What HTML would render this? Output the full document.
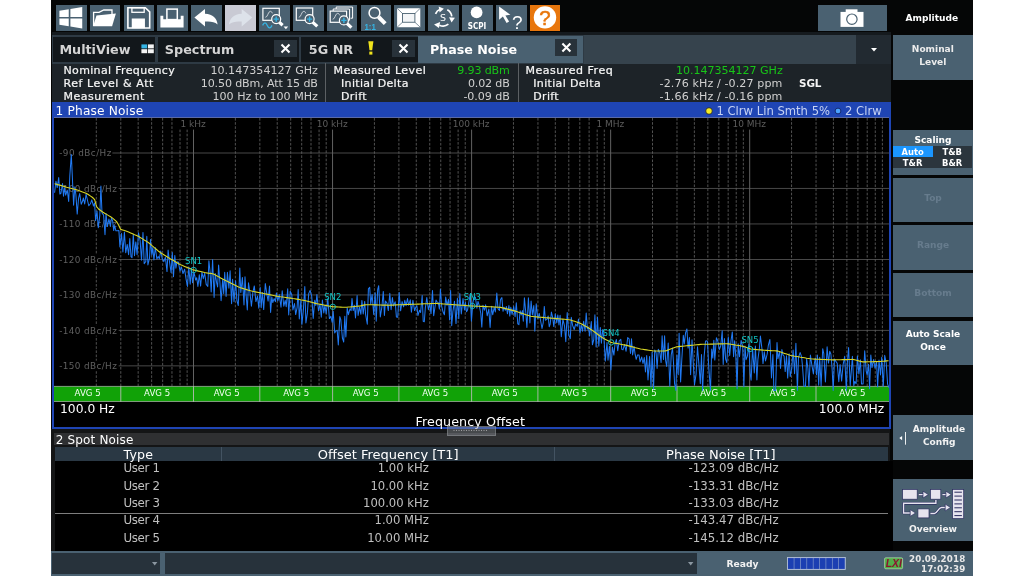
<!DOCTYPE html>
<html lang="en">
<head>
<meta charset="utf-8">
<title>Phase Noise</title>
<style>
html,body{margin:0;padding:0;background:#fff;}
body{width:1024px;height:576px;position:relative;overflow:hidden;font-family:"DejaVu Sans","Liberation Sans",sans-serif;}
#app{position:absolute;left:0;top:0;width:1024px;height:576px;will-change:transform;}
#app div{position:absolute;white-space:nowrap;line-height:1;}
#app svg{position:absolute;overflow:visible;}
.sb{-webkit-text-stroke:0.22px currentColor;}
.tb{border-radius:0;}
</style>
</head>
<body>
<div id="app">

<div style="left:51px;top:0px;width:922px;height:576px;background:#050606;"></div>
<div class="tb" style="left:55.9px;top:5.3px;width:30.7px;height:25.6px;background:#4a6171"><svg width="30.7" height="25.6" viewBox="0 0 30.7 25.6" style="left:0;top:0"><polygon points="3.4,5.75 12.75,4.25 12.75,12 3.4,12" fill="#fff"/><polygon points="14.4,4 26.25,2 26.25,12 14.4,12" fill="#fff"/><polygon points="3.4,13.5 12.75,13.5 12.75,21.25 3.4,19.75" fill="#fff"/><polygon points="14.4,13.5 26.25,13.5 26.25,23.5 14.4,21.6" fill="#fff"/></svg></div>
<div class="tb" style="left:89.75px;top:5.3px;width:30.7px;height:25.6px;background:#4a6171"><svg width="30.7" height="25.6" viewBox="0 0 30.7 25.6" style="left:0;top:0"><path d="M3.6,21 L3.6,7.3 L9,7.3 L13.8,5 L22,5 L22,9" fill="none" stroke="#fff" stroke-width="1.3"/><path d="M6.5,10.4 L25.9,8.6 L22.1,21.2 L3.1,21.2 Z" fill="#fff"/></svg></div>
<div class="tb" style="left:123.6px;top:5.3px;width:30.7px;height:25.6px;background:#4a6171"><svg width="30.7" height="25.6" viewBox="0 0 30.7 25.6" style="left:0;top:0"><path d="M3.9,2.7 L21.3,2.7 L25.7,6.8 L25.7,23 L3.9,23 Z" fill="none" stroke="#fff" stroke-width="1.6"/><rect x="7.9" y="2.7" width="12.3" height="4.6" fill="none" stroke="#fff" stroke-width="1.3"/><rect x="7.75" y="13.5" width="13.2" height="9.7" fill="#fff"/></svg></div>
<div class="tb" style="left:157.45px;top:5.3px;width:30.7px;height:25.6px;background:#4a6171"><svg width="30.7" height="25.6" viewBox="0 0 30.7 25.6" style="left:0;top:0"><path d="M3.4,10.8 L6.3,10.8 L6.3,14.2 L23.7,14.2 L23.7,10.8 L26.6,10.8 L26.6,22.5 L3.4,22.5 Z" fill="#fff"/><rect x="9.9" y="4.1" width="10.4" height="10.5" fill="none" stroke="#fff" stroke-width="1.5"/></svg></div>
<div class="tb" style="left:191.3px;top:5.3px;width:30.7px;height:25.6px;background:#4a6171"><svg width="30.7" height="25.6" viewBox="0 0 30.7 25.6" style="left:0;top:0"><path d="M3.4,12.6 L14,4.1 L14,8.8 C22,9 26,13.5 26.6,19.6 C23.5,16.6 19.5,16.3 14,16.6 L14,21.4 Z" fill="#fff"/></svg></div>
<div class="tb" style="left:225.15px;top:5.3px;width:30.7px;height:25.6px;background:#c9cad4"><svg width="30.7" height="25.6" viewBox="0 0 30.7 25.6" style="left:0;top:0"><path d="M27.3,12.6 L16.7,4.1 L16.7,8.8 C8.7,9 4.7,13.5 4.1,19.6 C7.2,16.6 11.2,16.3 16.7,16.6 L16.7,21.4 Z" fill="#dde2ea"/></svg></div>
<div class="tb" style="left:259.0px;top:5.3px;width:30.7px;height:25.6px;background:#4a6171"><svg width="30.7" height="25.6" viewBox="0 0 30.7 25.6" style="left:0;top:0"><rect x="3.9" y="3.3" width="16.4" height="12" fill="none" stroke="#fff" stroke-width="1.2"/><path d="M6.4,12.3 c2.5,0 2.5,-6 5,-6 c1.2,0 1.5,1 2,2" fill="none" stroke="#d8dde2" stroke-width="0.9"/><line x1="20.2" y1="17.1" x2="23.6" y2="20.2" stroke="#fff" stroke-width="3.2"/><circle cx="17.2" cy="14.1" r="4.5" fill="#4a6171" stroke="#fff" stroke-width="1.2"/><path d="M14.6,14.1 h5.2 M17.2,11.5 v5.2" stroke="#35b4e4" stroke-width="1.4" fill="none"/><path d="M3.6,20.4 c1.6,-3.4 3.2,-3.4 4.7,0 c1.5,3.4 3.1,3.4 4.7,0" fill="none" stroke="#35b4e4" stroke-width="1.3"/><polygon points="24.6,21.4 29.2,21.4 26.9,24.2" fill="#fff"/></svg></div>
<div class="tb" style="left:292.85px;top:5.3px;width:30.7px;height:25.6px;background:#4a6171"><svg width="30.7" height="25.6" viewBox="0 0 30.7 25.6" style="left:0;top:0"><rect x="3.3" y="3.0" width="16.4" height="12.3" fill="none" stroke="#fff" stroke-width="1.2"/><path d="M5.8,12.3 c2.5,0 2.5,-6 5,-6 c1.2,0 1.5,1 2,2" fill="none" stroke="#d8dde2" stroke-width="0.9"/><line x1="19.6" y1="17.1" x2="24.3" y2="21.4" stroke="#fff" stroke-width="3.2"/><circle cx="16.6" cy="14.1" r="4.5" fill="#4a6171" stroke="#fff" stroke-width="1.2"/><path d="M14.000000000000002,14.1 h5.2 M16.6,11.5 v5.2" stroke="#35b4e4" stroke-width="1.4" fill="none"/></svg></div>
<div class="tb" style="left:326.7px;top:5.3px;width:30.7px;height:25.6px;background:#4a6171"><svg width="30.7" height="25.6" viewBox="0 0 30.7 25.6" style="left:0;top:0"><path d="M6.2,6 v-2 h16.4 v11.2 h-2 M9.2,4 v-2 h16.4 v11.2 h-2" fill="none" stroke="#fff" stroke-width="1"/><rect x="3.2" y="6.1" width="16.4" height="11.2" fill="none" stroke="#fff" stroke-width="1.2"/><path d="M5.7,14.299999999999997 c2.5,0 2.5,-6 5,-6 c1.2,0 1.5,1 2,2" fill="none" stroke="#d8dde2" stroke-width="0.9"/><line x1="19.9" y1="18.4" x2="24.4" y2="22.6" stroke="#fff" stroke-width="3.2"/><circle cx="16.9" cy="15.4" r="4.5" fill="#4a6171" stroke="#fff" stroke-width="1.2"/><path d="M14.299999999999999,15.4 h5.2 M16.9,12.8 v5.2" stroke="#35b4e4" stroke-width="1.4" fill="none"/></svg></div>
<div class="tb" style="left:360.55px;top:5.3px;width:30.7px;height:25.6px;background:#4a6171"><svg width="30.7" height="25.6" viewBox="0 0 30.7 25.6" style="left:0;top:0"><line x1="17.6" y1="12" x2="24.2" y2="18.6" stroke="#fff" stroke-width="4"/><circle cx="13.5" cy="7.9" r="5.4" fill="none" stroke="#fff" stroke-width="1.5"/><text x="3.4" y="24.7" font-size="8.8" font-weight="bold" fill="#35b4e4" textLength="11.4" lengthAdjust="spacingAndGlyphs" font-family="Liberation Sans, sans-serif">1:1</text></svg></div>
<div class="tb" style="left:394.4px;top:5.3px;width:30.7px;height:25.6px;background:#4a6171"><svg width="30.7" height="25.6" viewBox="0 0 30.7 25.6" style="left:0;top:0"><rect x="3.1" y="3.25" width="23.2" height="19" fill="#fff"/><path d="M3.1,3.25 L8.5,8.5 M26.3,3.25 L20.9,8.5 M3.1,22.25 L8.5,17.25 M26.3,22.25 L20.9,17.25" stroke="#4a6171" stroke-width="0.7"/><rect x="8.5" y="8.5" width="12.4" height="8.75" fill="#f3f5f7" stroke="#4a6171" stroke-width="0.9"/></svg></div>
<div class="tb" style="left:428.25px;top:5.3px;width:30.7px;height:25.6px;background:#4a6171"><svg width="30.7" height="25.6" viewBox="0 0 30.7 25.6" style="left:0;top:0"><g transform="translate(15.2 12.3) scale(1.13) translate(-15 -12.25)"><g fill="none" stroke="#fff" stroke-width="1.5"><path d="M8.2,9.2 A7.6,7.6 0 0 1 12.3,5.2"/><path d="M18.6,5.6 A7.6,7.6 0 0 1 22.6,11.4"/><path d="M19.6,18.3 A7.6,7.6 0 0 1 11.6,19.2"/></g><polygon points="11,2.6 15.6,4.6 11.8,7.9" fill="#fff"/><polygon points="20.2,12.2 25.4,12.6 22.4,16.9" fill="#fff"/><polygon points="12.3,16.4 11.2,21.8 6.9,18.6" fill="#fff"/></g><text x="15" y="16" font-size="9.5" text-anchor="middle" fill="#fff" font-family="DejaVu Sans, Liberation Sans, sans-serif">S</text></svg></div>
<div class="tb" style="left:462.1px;top:5.3px;width:30.7px;height:25.6px;background:#4a6171"><svg width="30.7" height="25.6" viewBox="0 0 30.7 25.6" style="left:0;top:0"><circle cx="14.6" cy="7.4" r="5.9" fill="#fff"/><text x="15" y="24.1" font-size="8.1" font-weight="bold" text-anchor="middle" fill="#fff" font-family="DejaVu Sans Condensed, DejaVu Sans, Liberation Sans, sans-serif">SCPI</text></svg></div>
<div class="tb" style="left:495.95px;top:5.3px;width:30.7px;height:25.6px;background:#4a6171"><svg width="30.7" height="25.6" viewBox="0 0 30.7 25.6" style="left:0;top:0"><polygon points="3.1,1.6 3.1,14.75 6.9,11.6 10.6,17.9 13.1,16.6 9.4,10.4 14.4,9.75" fill="#fff"/><text x="21.2" y="24" font-size="19" text-anchor="middle" fill="#fff" font-family="Liberation Sans, sans-serif">?</text></svg></div>
<div class="tb" style="left:529.8px;top:5.3px;width:30.7px;height:25.6px;background:#e8760c"><svg width="30.7" height="25.6" viewBox="0 0 30.7 25.6" style="left:0;top:0"><circle cx="15" cy="12.4" r="11.2" fill="#fff"/><text x="15" y="19.6" font-size="20.5" text-anchor="middle" fill="#e8760c" stroke="#e8760c" stroke-width="0.5" font-family="Liberation Sans, sans-serif">?</text></svg></div>
<div class="tb" style="left:818px;top:5.4px;width:69.2px;height:25.6px;background:#4a6171"><svg width="69.6" height="25.6" viewBox="0 0 69.6 25.6" style="left:0;top:0"><rect x="22.5" y="6.9" width="23" height="15" fill="#fff"/><rect x="27.7" y="4.3" width="11.8" height="4" fill="#fff"/><circle cx="33.9" cy="14.2" r="5.2" fill="#fff" stroke="#4a6171" stroke-width="1.2"/></svg></div>
<div style="left:781.8px;width:300px;text-align:center;top:14px;font-size:9.05px;color:#fff;font-weight:bold;">Amplitude</div>
<div style="left:893px;top:35px;width:80px;height:44.6px;background:#4a6171;"></div>
<div style="left:782.8px;width:300px;text-align:center;top:45px;font-size:9.05px;color:#ececec;font-weight:bold;">Nominal</div>
<div style="left:782.8px;width:300px;text-align:center;top:58px;font-size:9.05px;color:#ececec;font-weight:bold;">Level</div>
<div style="left:893px;top:130.4px;width:80px;height:44.2px;background:#4a6171;"></div>
<div style="left:783px;width:300px;text-align:center;top:136px;font-size:9.05px;color:#fff;font-weight:bold;">Scaling</div>
<div style="left:893px;top:146.4px;width:39.6px;height:10.8px;background:#1b96ff;"></div>
<div style="left:932.6px;top:146.4px;width:39.2px;height:10.8px;background:#2b353d;"></div>
<div style="left:893px;top:157.2px;width:78.8px;height:11.2px;background:#2b353d;"></div>
<div style="left:762.6px;width:300px;text-align:center;top:148px;font-size:8.4px;color:#fff;font-weight:bold;">Auto</div>
<div style="left:802.2px;width:300px;text-align:center;top:148px;font-size:8.4px;color:#fff;font-weight:bold;">T&amp;B</div>
<div style="left:762.6px;width:300px;text-align:center;top:159px;font-size:8.4px;color:#fff;font-weight:bold;">T&amp;R</div>
<div style="left:802.2px;width:300px;text-align:center;top:159px;font-size:8.4px;color:#fff;font-weight:bold;">B&amp;R</div>
<div style="left:893px;top:177.8px;width:80px;height:44px;background:#4a6171;"></div>
<div style="left:783px;width:300px;text-align:center;top:194px;font-size:9.05px;color:#677c8d;font-weight:bold;">Top</div>
<div style="left:893px;top:225px;width:80px;height:44.6px;background:#4a6171;"></div>
<div style="left:783px;width:300px;text-align:center;top:241px;font-size:9.05px;color:#677c8d;font-weight:bold;">Range</div>
<div style="left:893px;top:272.8px;width:80px;height:44.6px;background:#4a6171;"></div>
<div style="left:783px;width:300px;text-align:center;top:289px;font-size:9.05px;color:#677c8d;font-weight:bold;">Bottom</div>
<div style="left:893px;top:320.6px;width:80px;height:44.2px;background:#4a6171;"></div>
<div style="left:783px;width:300px;text-align:center;top:330px;font-size:9.05px;color:#fff;font-weight:bold;">Auto Scale</div>
<div style="left:783px;width:300px;text-align:center;top:343px;font-size:9.05px;color:#fff;font-weight:bold;">Once</div>
<div style="left:893px;top:415.4px;width:80px;height:44.6px;background:#4a6171;"></div>
<div style="left:789px;width:300px;text-align:center;top:425px;font-size:9.05px;color:#f2f2f2;font-weight:bold;">Amplitude</div>
<div style="left:789.2px;width:300px;text-align:center;top:438px;font-size:9.05px;color:#f2f2f2;font-weight:bold;">Config</div>
<svg width="10" height="16" viewBox="0 0 10 16" style="left:898px;top:430px"><polygon points="1.3,8.1 4.1,6 4.1,10.2" fill="#fff"/><line x1="7.5" y1="2" x2="7.5" y2="14.7" stroke="#fff" stroke-width="0.9"/></svg>
<div style="left:893px;top:479px;width:80px;height:61.8px;background:#4a6171;"></div>
<div style="left:783px;width:300px;text-align:center;top:525px;font-size:9.15px;color:#f2f2f2;font-weight:bold;">Overview</div>
<svg width="80" height="62" viewBox="893 479 80 62" style="left:893px;top:479px"><g stroke="#2a2c5e" stroke-width="0.7" fill="#e6e4ee"><rect x="902.6" y="489.4" width="14.6" height="9.8"/><rect x="930.4" y="489.4" width="10.4" height="9.8"/><rect x="952.6" y="489.4" width="11.1" height="29.2"/><rect x="917.9" y="508.9" width="11.1" height="9"/></g><g stroke="#2a2c5e" stroke-width="2.7" fill="none" stroke-linejoin="round"><path d="M918.8,494.6 H925"/><path d="M942.4,494.6 H948"/><path d="M935.9,499.9 V503.3 H903.6 V513 H912"/><path d="M930.4,513.5 H934.5 C937.5,513.5 938,507.5 941.5,507.5 H947"/></g><g stroke="#e6e4ee" stroke-width="1.4" fill="none"><path d="M918.8,494.6 H925"/><path d="M942.4,494.6 H948"/><path d="M935.9,499.9 V503.3 H903.6 V513 H912"/><path d="M930.4,513.5 H934.5 C937.5,513.5 938,507.5 941.5,507.5 H947"/></g><polygon points="928.4,494.6 923.0,491.20000000000005 923.0,498.0" fill="#e6e4ee" stroke="#2a2c5e" stroke-width="0.7"/><polygon points="951.3,494.6 945.9,491.20000000000005 945.9,498.0" fill="#e6e4ee" stroke="#2a2c5e" stroke-width="0.7"/><polygon points="915.6,513 910.2,509.6 910.2,516.4" fill="#e6e4ee" stroke="#2a2c5e" stroke-width="0.7"/><polygon points="950.6,507.5 945.2,504.1 945.2,510.9" fill="#e6e4ee" stroke="#2a2c5e" stroke-width="0.7"/><line x1="954.4" y1="492.2" x2="961.9" y2="492.2" stroke="#2a2c5e" stroke-width="1"/><line x1="954.4" y1="496.1" x2="961.9" y2="496.1" stroke="#2a2c5e" stroke-width="1"/><line x1="954.4" y1="500.0" x2="961.9" y2="500.0" stroke="#2a2c5e" stroke-width="1"/><line x1="954.4" y1="503.9" x2="961.9" y2="503.9" stroke="#2a2c5e" stroke-width="1"/><line x1="954.4" y1="507.8" x2="961.9" y2="507.8" stroke="#2a2c5e" stroke-width="1"/><line x1="954.4" y1="511.7" x2="961.9" y2="511.7" stroke="#2a2c5e" stroke-width="1"/><line x1="954.4" y1="515.6" x2="961.9" y2="515.6" stroke="#2a2c5e" stroke-width="1"/></svg>
<div style="left:52px;top:32px;width:839px;height:3px;background:#151a1e;"></div>
<div style="left:52px;top:35px;width:839px;height:29px;background:#2e3a44;"></div>
<div style="left:52.6px;top:37px;width:102.6px;height:25px;background:#12171b;"></div>
<div style="left:59.4px;top:44px;font-size:12.75px;color:#d4d4d4;font-weight:bold;">MultiView</div>
<svg width="14" height="11" viewBox="0 0 14 11" style="left:141px;top:43.6px"><rect x="0.4" y="0.4" width="5.8" height="4" fill="#35b4e4"/><rect x="7" y="0.4" width="5.8" height="4" fill="#f4f4f4"/><rect x="0.4" y="5.2" width="5.8" height="4" fill="#f4f4f4"/><rect x="7" y="5.2" width="5.8" height="4" fill="#f4f4f4"/></svg>
<div style="left:157.8px;top:37px;width:141.4px;height:25px;background:#12171b;"></div>
<div style="left:164.8px;top:44px;font-size:12.79px;color:#d4d4d4;font-weight:bold;">Spectrum</div>
<div style="left:274px;top:39.6px;width:23px;height:17.2px;background:#28323a"><svg width="23" height="17.2" viewBox="0 0 23 17.2" style="left:0;top:0"><path d="M7.5,4.6 L15.5,12.6 M15.5,4.6 L7.5,12.6" stroke="#fff" stroke-width="2.1" fill="none"/></svg></div>
<div style="left:301px;top:37px;width:117.3px;height:25px;background:#12171b;"></div>
<div style="left:308.8px;top:44px;font-size:12.8px;color:#d4d4d4;font-weight:bold;">5G NR</div>
<svg width="8" height="16" viewBox="0 0 8 16" style="left:367px;top:40px"><path d="M1.3,1.2 H6.4 L5.2,10.2 H2.5 Z" fill="#f0e31c"/><rect x="2.3" y="11.6" width="3.1" height="3" fill="#f0e31c"/></svg>
<div style="left:392.3px;top:39.6px;width:23px;height:17.2px;background:#28323a"><svg width="23" height="17.2" viewBox="0 0 23 17.2" style="left:0;top:0"><path d="M7.5,4.6 L15.5,12.6 M15.5,4.6 L7.5,12.6" stroke="#fff" stroke-width="2.1" fill="none"/></svg></div>
<div style="left:418.3px;top:36.4px;width:165.2px;height:27px;background:#4a6171;"></div>
<div style="left:430px;top:44px;font-size:12.65px;color:#fff;font-weight:bold;">Phase Noise</div>
<div style="left:554.7px;top:38.8px;width:22.8px;height:16.8px;background:#28323a"><svg width="22.8" height="16.8" viewBox="0 0 22.8 16.8" style="left:0;top:0"><path d="M7.4,4.4 L15.4,12.4 M15.4,4.4 L7.4,12.4" stroke="#fff" stroke-width="2.1" fill="none"/></svg></div>
<div style="left:583.5px;top:35px;width:272px;height:28.6px;background:#36434d;"></div>
<div style="left:855.5px;top:35px;width:35.5px;height:28.6px;background:#222a31;"></div>
<svg width="8" height="6" viewBox="0 0 8 6" style="left:870px;top:46.5px"><polygon points="1,1 7,1 4,4.6" fill="#fff"/></svg>
<div style="left:52px;top:63.6px;width:839px;height:39px;background:#1d2328;"></div>
<div style="left:325px;top:63px;width:1px;height:39px;background:#5c6064;"></div>
<div style="left:518px;top:63px;width:1px;height:39px;background:#5c6064;"></div>
<div class="sb" style="left:63.5px;top:65px;font-size:11px;color:#f6f6f6;letter-spacing:0.340px;">Nominal Frequency</div>
<div class="sb" style="left:63.5px;top:78px;font-size:11px;color:#f6f6f6;letter-spacing:0.570px;">Ref Level &amp; Att</div>
<div class="sb" style="left:63.5px;top:91px;font-size:11px;color:#f6f6f6;letter-spacing:0.521px;">Measurement</div>
<div style="right:706.1px;top:65px;font-size:11.1px;color:#d0d0d0;letter-spacing:-0.001px;">10.147354127 GHz</div>
<div style="right:706.23px;top:78px;font-size:11.1px;color:#d0d0d0;letter-spacing:-0.134px;">10.50 dBm, Att 15 dB</div>
<div style="right:706.1px;top:91px;font-size:11.1px;color:#d0d0d0;letter-spacing:-0.003px;">100 Hz to 100 MHz</div>
<div class="sb" style="left:333.5px;top:65px;font-size:11px;color:#f6f6f6;letter-spacing:0.463px;">Measured Level</div>
<div class="sb" style="left:341px;top:78px;font-size:11px;color:#f6f6f6;letter-spacing:0.344px;">Initial Delta</div>
<div class="sb" style="left:341px;top:91px;font-size:11px;color:#f6f6f6;letter-spacing:0.372px;">Drift</div>
<div style="right:514.43px;top:65px;font-size:11.1px;color:#18c418;letter-spacing:-0.183px;">9.93 dBm</div>
<div style="right:514.44px;top:78px;font-size:11.1px;color:#d0d0d0;letter-spacing:-0.186px;">0.02 dB</div>
<div style="right:514.33px;top:91px;font-size:11.1px;color:#d0d0d0;letter-spacing:-0.083px;">-0.09 dB</div>
<div class="sb" style="left:525.5px;top:65px;font-size:11px;color:#f6f6f6;letter-spacing:0.535px;">Measured Freq</div>
<div class="sb" style="left:533.25px;top:78px;font-size:11px;color:#f6f6f6;letter-spacing:0.344px;">Initial Delta</div>
<div class="sb" style="left:533.25px;top:91px;font-size:11px;color:#f6f6f6;letter-spacing:0.332px;">Drift</div>
<div style="right:241.35px;top:65px;font-size:11.1px;color:#18c418;letter-spacing:-0.051px;">10.147354127 GHz</div>
<div style="right:241.5px;top:78px;font-size:11.1px;color:#d0d0d0;letter-spacing:0.105px;">-2.76 kHz / -0.27 ppm</div>
<div style="right:241.5px;top:91px;font-size:11.1px;color:#d0d0d0;letter-spacing:0.105px;">-1.66 kHz / -0.16 ppm</div>
<div style="left:799px;top:78px;font-size:10.4px;color:#f4f4f4;font-weight:bold;letter-spacing:-0.084px;">SGL</div>
<div style="left:52px;top:102px;width:839px;height:327px;background:#1f45b4;"></div>
<div style="left:54px;top:117px;width:835px;height:1px;background:#5a6aa6;"></div>
<div style="left:54px;top:118px;width:835px;height:309.4px;background:#000;"></div>
<div style="left:55.6px;top:105px;font-size:12.2px;color:#fff;letter-spacing:0.155px;">1 Phase Noise</div>
<div style="left:716.4px;top:106px;font-size:11.6px;color:#c6d2f4;">1 Clrw Lin Smth 5%</div>
<div style="left:845px;top:106px;font-size:11.6px;color:#c6d2f4;">2 Clrw</div>
<svg width="8" height="8" viewBox="0 0 8 8" style="left:705.4px;top:106.6px"><circle cx="4" cy="4" r="3.3" fill="#f4ec22" stroke="#1a1a30" stroke-width="0.8"/></svg>
<svg width="8" height="8" viewBox="0 0 8 8" style="left:834px;top:106.5px"><circle cx="4" cy="4" r="2.9" fill="#4aa2ff" stroke="#15286e" stroke-width="1"/></svg>
<svg width="1024" height="576" viewBox="0 0 1024 576" style="left:0;top:0"><line x1="112.2" y1="153.0" x2="889" y2="153.0" stroke="#484848" stroke-width="1"/><line x1="118.4" y1="188.45" x2="889" y2="188.45" stroke="#484848" stroke-width="1"/><line x1="118.4" y1="223.95" x2="889" y2="223.95" stroke="#484848" stroke-width="1"/><line x1="118.4" y1="259.5" x2="889" y2="259.5" stroke="#484848" stroke-width="1"/><line x1="118.4" y1="294.95" x2="889" y2="294.95" stroke="#484848" stroke-width="1"/><line x1="118.4" y1="330.4" x2="889" y2="330.4" stroke="#484848" stroke-width="1"/><line x1="118.4" y1="365.85" x2="889" y2="365.85" stroke="#484848" stroke-width="1"/><line x1="96.31" y1="118" x2="96.31" y2="386" stroke="#606060" stroke-width="0.85" stroke-dasharray="2.6,1.55"/><line x1="120.79" y1="118" x2="120.79" y2="386" stroke="#606060" stroke-width="0.85" stroke-dasharray="2.6,1.55"/><line x1="138.17" y1="118" x2="138.17" y2="386" stroke="#606060" stroke-width="0.85" stroke-dasharray="2.6,1.55"/><line x1="151.64" y1="118" x2="151.64" y2="386" stroke="#606060" stroke-width="0.85" stroke-dasharray="2.6,1.55"/><line x1="162.65" y1="118" x2="162.65" y2="386" stroke="#606060" stroke-width="0.85" stroke-dasharray="2.6,1.55"/><line x1="171.96" y1="118" x2="171.96" y2="386" stroke="#606060" stroke-width="0.85" stroke-dasharray="2.6,1.55"/><line x1="180.02" y1="129.6" x2="180.02" y2="386" stroke="#606060" stroke-width="0.85" stroke-dasharray="2.6,1.55"/><line x1="187.14" y1="129.6" x2="187.14" y2="386" stroke="#606060" stroke-width="0.85" stroke-dasharray="2.6,1.55"/><line x1="193.50" y1="129.6" x2="193.50" y2="386" stroke="#626262" stroke-width="1"/><line x1="235.36" y1="118" x2="235.36" y2="386" stroke="#606060" stroke-width="0.85" stroke-dasharray="2.6,1.55"/><line x1="259.84" y1="118" x2="259.84" y2="386" stroke="#606060" stroke-width="0.85" stroke-dasharray="2.6,1.55"/><line x1="277.22" y1="118" x2="277.22" y2="386" stroke="#606060" stroke-width="0.85" stroke-dasharray="2.6,1.55"/><line x1="290.69" y1="118" x2="290.69" y2="386" stroke="#606060" stroke-width="0.85" stroke-dasharray="2.6,1.55"/><line x1="301.70" y1="118" x2="301.70" y2="386" stroke="#606060" stroke-width="0.85" stroke-dasharray="2.6,1.55"/><line x1="311.01" y1="118" x2="311.01" y2="386" stroke="#606060" stroke-width="0.85" stroke-dasharray="2.6,1.55"/><line x1="319.07" y1="129.6" x2="319.07" y2="386" stroke="#606060" stroke-width="0.85" stroke-dasharray="2.6,1.55"/><line x1="326.19" y1="129.6" x2="326.19" y2="386" stroke="#606060" stroke-width="0.85" stroke-dasharray="2.6,1.55"/><line x1="332.55" y1="129.6" x2="332.55" y2="386" stroke="#626262" stroke-width="1"/><line x1="374.41" y1="118" x2="374.41" y2="386" stroke="#606060" stroke-width="0.85" stroke-dasharray="2.6,1.55"/><line x1="398.89" y1="118" x2="398.89" y2="386" stroke="#606060" stroke-width="0.85" stroke-dasharray="2.6,1.55"/><line x1="416.27" y1="118" x2="416.27" y2="386" stroke="#606060" stroke-width="0.85" stroke-dasharray="2.6,1.55"/><line x1="429.74" y1="118" x2="429.74" y2="386" stroke="#606060" stroke-width="0.85" stroke-dasharray="2.6,1.55"/><line x1="440.75" y1="118" x2="440.75" y2="386" stroke="#606060" stroke-width="0.85" stroke-dasharray="2.6,1.55"/><line x1="450.06" y1="118" x2="450.06" y2="386" stroke="#606060" stroke-width="0.85" stroke-dasharray="2.6,1.55"/><line x1="458.12" y1="129.6" x2="458.12" y2="386" stroke="#606060" stroke-width="0.85" stroke-dasharray="2.6,1.55"/><line x1="465.24" y1="129.6" x2="465.24" y2="386" stroke="#606060" stroke-width="0.85" stroke-dasharray="2.6,1.55"/><line x1="471.60" y1="129.6" x2="471.60" y2="386" stroke="#626262" stroke-width="1"/><line x1="513.46" y1="118" x2="513.46" y2="386" stroke="#606060" stroke-width="0.85" stroke-dasharray="2.6,1.55"/><line x1="537.94" y1="118" x2="537.94" y2="386" stroke="#606060" stroke-width="0.85" stroke-dasharray="2.6,1.55"/><line x1="555.32" y1="118" x2="555.32" y2="386" stroke="#606060" stroke-width="0.85" stroke-dasharray="2.6,1.55"/><line x1="568.79" y1="118" x2="568.79" y2="386" stroke="#606060" stroke-width="0.85" stroke-dasharray="2.6,1.55"/><line x1="579.80" y1="118" x2="579.80" y2="386" stroke="#606060" stroke-width="0.85" stroke-dasharray="2.6,1.55"/><line x1="589.11" y1="118" x2="589.11" y2="386" stroke="#606060" stroke-width="0.85" stroke-dasharray="2.6,1.55"/><line x1="597.17" y1="129.6" x2="597.17" y2="386" stroke="#606060" stroke-width="0.85" stroke-dasharray="2.6,1.55"/><line x1="604.29" y1="129.6" x2="604.29" y2="386" stroke="#606060" stroke-width="0.85" stroke-dasharray="2.6,1.55"/><line x1="610.65" y1="129.6" x2="610.65" y2="386" stroke="#626262" stroke-width="1"/><line x1="652.51" y1="118" x2="652.51" y2="386" stroke="#606060" stroke-width="0.85" stroke-dasharray="2.6,1.55"/><line x1="676.99" y1="118" x2="676.99" y2="386" stroke="#606060" stroke-width="0.85" stroke-dasharray="2.6,1.55"/><line x1="694.37" y1="118" x2="694.37" y2="386" stroke="#606060" stroke-width="0.85" stroke-dasharray="2.6,1.55"/><line x1="707.84" y1="118" x2="707.84" y2="386" stroke="#606060" stroke-width="0.85" stroke-dasharray="2.6,1.55"/><line x1="718.85" y1="118" x2="718.85" y2="386" stroke="#606060" stroke-width="0.85" stroke-dasharray="2.6,1.55"/><line x1="728.16" y1="118" x2="728.16" y2="386" stroke="#606060" stroke-width="0.85" stroke-dasharray="2.6,1.55"/><line x1="736.22" y1="129.6" x2="736.22" y2="386" stroke="#606060" stroke-width="0.85" stroke-dasharray="2.6,1.55"/><line x1="743.34" y1="129.6" x2="743.34" y2="386" stroke="#606060" stroke-width="0.85" stroke-dasharray="2.6,1.55"/><line x1="749.70" y1="129.6" x2="749.70" y2="386" stroke="#626262" stroke-width="1"/><line x1="791.56" y1="118" x2="791.56" y2="386" stroke="#606060" stroke-width="0.85" stroke-dasharray="2.6,1.55"/><line x1="816.04" y1="118" x2="816.04" y2="386" stroke="#606060" stroke-width="0.85" stroke-dasharray="2.6,1.55"/><line x1="833.42" y1="118" x2="833.42" y2="386" stroke="#606060" stroke-width="0.85" stroke-dasharray="2.6,1.55"/><line x1="846.89" y1="118" x2="846.89" y2="386" stroke="#606060" stroke-width="0.85" stroke-dasharray="2.6,1.55"/><line x1="857.90" y1="118" x2="857.90" y2="386" stroke="#606060" stroke-width="0.85" stroke-dasharray="2.6,1.55"/><line x1="867.21" y1="118" x2="867.21" y2="386" stroke="#606060" stroke-width="0.85" stroke-dasharray="2.6,1.55"/><line x1="875.27" y1="118" x2="875.27" y2="386" stroke="#606060" stroke-width="0.85" stroke-dasharray="2.6,1.55"/><line x1="882.39" y1="118" x2="882.39" y2="386" stroke="#606060" stroke-width="0.85" stroke-dasharray="2.6,1.55"/><text x="193.1" y="127" font-size="9" text-anchor="middle" fill="#5c5c5c" font-family="DejaVu Sans, Liberation Sans, sans-serif">1 kHz</text><text x="332.2" y="127" font-size="9" text-anchor="middle" fill="#5c5c5c" font-family="DejaVu Sans, Liberation Sans, sans-serif">10 kHz</text><text x="471.2" y="127" font-size="9" text-anchor="middle" fill="#5c5c5c" font-family="DejaVu Sans, Liberation Sans, sans-serif">100 kHz</text><text x="610.3" y="127" font-size="9" text-anchor="middle" fill="#5c5c5c" font-family="DejaVu Sans, Liberation Sans, sans-serif">1 MHz</text><text x="749.3" y="127" font-size="9" text-anchor="middle" fill="#5c5c5c" font-family="DejaVu Sans, Liberation Sans, sans-serif">10 MHz</text><rect x="58.6" y="147.8" width="53.6" height="10.4" fill="#000"/><text x="59.2" y="156.4" font-size="8.85" fill="#606060" textLength="52.1" lengthAdjust="spacing" font-family="DejaVu Sans, Liberation Sans, sans-serif">-90 dBc/Hz</text><rect x="58.6" y="183.2" width="59.8" height="10.4" fill="#000"/><text x="59.2" y="191.8" font-size="8.85" fill="#606060" textLength="57.6" lengthAdjust="spacing" font-family="DejaVu Sans, Liberation Sans, sans-serif">-100 dBc/Hz</text><rect x="58.6" y="218.8" width="59.8" height="10.4" fill="#000"/><text x="59.2" y="227.3" font-size="8.85" fill="#606060" textLength="57.6" lengthAdjust="spacing" font-family="DejaVu Sans, Liberation Sans, sans-serif">-110 dBc/Hz</text><rect x="58.6" y="254.3" width="59.8" height="10.4" fill="#000"/><text x="59.2" y="262.9" font-size="8.85" fill="#606060" textLength="57.6" lengthAdjust="spacing" font-family="DejaVu Sans, Liberation Sans, sans-serif">-120 dBc/Hz</text><rect x="58.6" y="289.8" width="59.8" height="10.4" fill="#000"/><text x="59.2" y="298.3" font-size="8.85" fill="#606060" textLength="57.6" lengthAdjust="spacing" font-family="DejaVu Sans, Liberation Sans, sans-serif">-130 dBc/Hz</text><rect x="58.6" y="325.2" width="59.8" height="10.4" fill="#000"/><text x="59.2" y="333.8" font-size="8.85" fill="#606060" textLength="57.6" lengthAdjust="spacing" font-family="DejaVu Sans, Liberation Sans, sans-serif">-140 dBc/Hz</text><rect x="58.6" y="360.7" width="59.8" height="10.4" fill="#000"/><text x="59.2" y="369.2" font-size="8.85" fill="#606060" textLength="57.6" lengthAdjust="spacing" font-family="DejaVu Sans, Liberation Sans, sans-serif">-150 dBc/Hz</text><rect x="54" y="386" width="835" height="16" fill="#11a207"/><rect x="54" y="385.9" width="835" height="1" fill="#7f9a7c"/><rect x="54" y="401" width="835" height="1" fill="#7f9a7c"/><text x="87.6" y="395.9" font-size="8.6" text-anchor="middle" fill="#f4fff4" font-family="DejaVu Sans, Liberation Sans, sans-serif">AVG 5</text><line x1="120.8" y1="386" x2="120.8" y2="402" stroke="#a4b8a2" stroke-width="1"/><text x="157.1" y="395.9" font-size="8.6" text-anchor="middle" fill="#f4fff4" font-family="DejaVu Sans, Liberation Sans, sans-serif">AVG 5</text><line x1="193.5" y1="386" x2="193.5" y2="402" stroke="#a4b8a2" stroke-width="1"/><text x="226.7" y="395.9" font-size="8.6" text-anchor="middle" fill="#f4fff4" font-family="DejaVu Sans, Liberation Sans, sans-serif">AVG 5</text><line x1="259.8" y1="386" x2="259.8" y2="402" stroke="#a4b8a2" stroke-width="1"/><text x="296.2" y="395.9" font-size="8.6" text-anchor="middle" fill="#f4fff4" font-family="DejaVu Sans, Liberation Sans, sans-serif">AVG 5</text><line x1="332.6" y1="386" x2="332.6" y2="402" stroke="#a4b8a2" stroke-width="1"/><text x="365.7" y="395.9" font-size="8.6" text-anchor="middle" fill="#f4fff4" font-family="DejaVu Sans, Liberation Sans, sans-serif">AVG 5</text><line x1="398.9" y1="386" x2="398.9" y2="402" stroke="#a4b8a2" stroke-width="1"/><text x="435.2" y="395.9" font-size="8.6" text-anchor="middle" fill="#f4fff4" font-family="DejaVu Sans, Liberation Sans, sans-serif">AVG 5</text><line x1="471.6" y1="386" x2="471.6" y2="402" stroke="#a4b8a2" stroke-width="1"/><text x="504.8" y="395.9" font-size="8.6" text-anchor="middle" fill="#f4fff4" font-family="DejaVu Sans, Liberation Sans, sans-serif">AVG 5</text><line x1="537.9" y1="386" x2="537.9" y2="402" stroke="#a4b8a2" stroke-width="1"/><text x="574.3" y="395.9" font-size="8.6" text-anchor="middle" fill="#f4fff4" font-family="DejaVu Sans, Liberation Sans, sans-serif">AVG 5</text><line x1="610.7" y1="386" x2="610.7" y2="402" stroke="#a4b8a2" stroke-width="1"/><text x="643.8" y="395.9" font-size="8.6" text-anchor="middle" fill="#f4fff4" font-family="DejaVu Sans, Liberation Sans, sans-serif">AVG 5</text><line x1="677.0" y1="386" x2="677.0" y2="402" stroke="#a4b8a2" stroke-width="1"/><text x="713.3" y="395.9" font-size="8.6" text-anchor="middle" fill="#f4fff4" font-family="DejaVu Sans, Liberation Sans, sans-serif">AVG 5</text><line x1="749.7" y1="386" x2="749.7" y2="402" stroke="#a4b8a2" stroke-width="1"/><text x="782.9" y="395.9" font-size="8.6" text-anchor="middle" fill="#f4fff4" font-family="DejaVu Sans, Liberation Sans, sans-serif">AVG 5</text><line x1="816.0" y1="386" x2="816.0" y2="402" stroke="#a4b8a2" stroke-width="1"/><text x="852.4" y="395.9" font-size="8.6" text-anchor="middle" fill="#f4fff4" font-family="DejaVu Sans, Liberation Sans, sans-serif">AVG 5</text><polyline fill="none" stroke="#2079f2" stroke-width="1.02" stroke-linejoin="round" points="54.6,192.8 55.9,181.2 57.2,187.6 58.7,177.5 59.9,194.1 60.9,193.4 62.5,183.5 63.5,196.3 64.5,187.8 65.7,195.2 67.3,190.2 68.7,201.4 69.8,176.0 71.3,154.5 72.4,178.0 73.6,205.3 74.8,186.9 75.9,194.9 77.2,214.1 78.6,198.0 79.7,193.6 81.2,204.2 82.3,201.8 83.4,198.0 84.7,203.9 86.1,194.1 87.3,199.5 88.8,205.8 90.4,203.8 91.8,199.8 93.5,206.0 94.6,203.1 95.6,220.6 97.0,211.1 98.3,227.8 99.8,215.5 100.9,186.0 102.0,212.9 103.6,215.1 105.0,234.7 106.0,213.4 107.4,226.6 108.9,219.1 110.4,226.2 111.5,217.6 112.7,221.2 113.7,230.6 114.7,225.5 115.9,230.8 117.5,230.7 118.9,230.6 119.9,247.0 121.5,233.4 122.9,252.0 124.4,232.1 125.7,252.8 127.2,244.4 128.6,254.7 129.8,238.6 131.0,256.7 132.0,257.7 133.3,234.2 134.5,255.7 135.8,241.9 137.1,254.7 138.5,232.8 140.1,240.5 141.5,260.3 143.0,232.4 144.2,263.7 145.8,261.5 146.8,236.3 147.9,265.0 149.5,258.1 150.5,239.4 151.8,255.0 152.8,247.5 153.9,259.9 155.3,247.5 156.9,259.1 158.2,256.4 159.3,258.9 160.7,251.1 162.2,258.6 163.8,261.6 165.4,257.3 167.0,271.6 168.1,250.1 169.5,261.8 171.1,272.7 172.3,252.6 173.5,276.7 174.8,255.4 175.9,268.2 176.9,261.9 178.4,262.1 180.0,271.1 181.4,266.9 183.0,273.6 184.6,269.2 186.2,279.9 187.5,286.5 188.8,266.9 190.2,284.2 191.5,268.0 192.5,282.8 194.1,272.7 195.7,280.1 196.7,277.7 197.9,286.5 199.3,274.8 200.6,286.1 201.9,272.1 203.3,278.7 204.7,273.2 206.2,284.4 207.8,286.4 208.9,260.8 210.0,271.3 211.2,291.9 212.6,259.5 214.1,297.5 215.2,273.4 216.5,282.0 217.6,287.0 218.6,264.9 219.9,282.3 221.1,300.8 222.7,279.1 223.7,293.8 224.7,272.3 226.1,296.4 227.4,272.2 228.9,288.3 230.1,270.7 231.6,303.8 232.6,279.2 234.0,301.8 235.6,280.8 236.9,300.5 238.3,305.5 239.8,267.9 240.8,292.6 242.4,277.4 244.0,304.9 245.0,276.8 246.0,293.7 247.3,310.0 248.5,282.7 249.9,292.3 251.4,306.2 252.9,292.1 254.3,285.9 255.9,301.6 257.5,296.1 258.8,308.2 260.2,287.4 261.2,307.8 262.4,292.4 263.7,309.6 265.3,283.6 266.9,294.1 268.1,301.1 269.5,286.0 270.6,312.5 271.8,296.9 272.8,302.6 274.1,298.6 275.4,301.6 276.4,292.9 277.8,300.9 279.3,294.6 281.0,307.2 282.2,290.7 283.8,306.2 285.2,300.4 286.2,306.7 287.7,288.7 288.7,315.0 290.2,291.2 291.8,294.8 292.9,309.9 294.5,303.5 295.7,314.6 297.1,307.6 298.2,289.4 299.3,319.0 300.9,299.9 301.9,324.5 303.4,309.6 304.8,286.5 305.9,322.9 307.4,312.9 308.7,293.6 310.1,290.4 311.7,296.1 313.2,318.4 314.7,300.2 315.8,305.4 316.9,294.6 318.5,311.0 320.0,304.3 321.3,317.2 322.4,300.1 323.8,312.9 324.9,305.1 326.2,313.7 327.8,298.5 329.4,318.6 330.9,316.4 332.2,322.3 333.2,311.3 334.7,333.0 335.9,331.0 337.2,330.4 338.3,345.0 339.8,316.6 340.8,319.6 342.4,338.0 343.7,342.0 344.8,316.2 345.9,336.9 347.2,307.8 348.4,314.7 350.0,308.8 351.1,310.6 352.0,298.4 353.2,310.6 354.4,305.2 355.5,318.0 357.1,295.5 358.1,315.5 359.5,307.2 360.9,314.3 361.9,300.4 363.2,314.0 364.7,301.4 365.6,314.3 367.3,324.2 368.4,288.8 369.7,287.3 370.7,304.2 372.1,294.4 373.7,314.4 375.2,292.8 376.2,321.2 377.7,289.5 378.7,285.7 380.3,316.9 381.9,306.8 383.3,291.4 384.4,315.5 385.5,301.0 387.1,303.4 388.3,310.6 389.8,293.3 391.1,309.8 392.4,297.5 393.5,306.0 395.2,301.7 396.4,316.9 397.7,317.2 399.2,292.4 400.6,310.8 402.1,301.6 403.6,306.8 404.8,300.3 406.1,305.7 407.5,298.6 408.6,305.2 410.3,299.8 411.4,312.2 412.9,300.3 414.6,310.6 415.7,307.5 416.9,305.7 417.9,315.5 419.5,310.3 420.6,312.4 422.2,295.4 423.2,321.2 424.3,321.8 425.3,308.1 426.8,297.6 428.4,309.7 429.8,303.6 431.0,313.6 432.5,290.4 433.7,315.7 434.7,309.0 436.0,300.1 437.1,301.9 438.3,302.6 439.4,309.1 440.4,289.3 441.7,306.3 443.1,312.1 444.4,314.7 445.7,297.0 447.0,305.3 448.5,299.3 449.6,319.9 450.6,290.5 451.7,325.8 452.9,311.5 454.5,301.2 456.0,323.6 457.4,298.3 458.8,318.7 459.8,293.5 461.3,313.9 463.0,298.6 464.5,310.0 465.4,302.3 466.5,311.8 467.5,310.2 468.9,302.1 470.2,294.2 471.4,321.3 472.8,302.9 474.2,296.7 475.4,297.2 476.9,308.2 478.0,301.4 479.3,305.7 480.8,313.5 481.8,327.1 483.0,305.3 484.4,310.2 485.6,304.8 487.2,315.8 488.8,309.0 490.1,327.5 491.5,306.3 492.7,314.8 494.2,307.3 495.3,312.0 496.8,293.0 498.0,308.6 499.4,310.5 500.5,299.5 501.9,297.6 503.0,311.3 504.0,307.2 505.3,310.3 506.4,306.5 507.4,313.8 508.9,305.5 509.8,316.1 510.8,307.3 512.1,314.5 513.7,306.6 515.1,316.8 516.3,302.8 517.8,323.9 518.9,324.7 520.1,310.7 521.3,315.0 522.4,310.5 523.3,321.3 524.4,297.8 525.8,312.7 526.9,327.4 528.4,297.8 529.9,322.9 531.1,301.0 532.4,314.9 533.8,305.5 534.8,331.3 536.2,303.7 537.8,318.8 539.3,313.6 540.4,319.5 542.0,328.5 543.2,322.8 544.3,306.4 545.4,320.3 547.0,319.2 548.2,316.0 549.2,326.7 550.2,324.0 551.4,312.0 552.7,317.6 553.8,326.6 555.3,314.0 556.8,322.8 557.8,314.9 559.0,324.9 560.1,315.3 561.3,336.8 562.9,319.4 564.5,325.8 565.8,341.7 567.2,312.5 568.8,335.1 570.3,338.6 571.3,317.3 572.6,325.4 574.2,329.5 575.7,324.0 577.2,326.3 578.5,319.0 580.0,333.2 581.2,324.9 582.5,331.2 583.6,321.2 585.1,331.2 586.2,313.0 587.4,329.1 588.5,327.2 589.6,335.9 591.3,321.6 592.4,344.8 593.8,339.5 594.9,314.7 596.1,347.1 597.5,317.3 598.8,346.3 600.3,327.4 601.4,343.2 602.7,329.6 604.0,338.3 605.3,361.1 607.0,342.4 608.0,360.2 609.4,346.3 610.9,370.0 612.4,347.1 613.9,355.1 615.0,343.9 616.4,339.5 617.7,350.8 619.2,340.9 620.8,339.3 621.8,349.4 623.0,349.9 624.5,344.5 626.1,351.3 627.7,337.5 629.1,338.8 630.5,353.5 631.5,338.8 632.6,354.9 634.1,346.6 635.1,354.2 636.2,359.3 637.5,355.0 639.0,354.9 640.1,361.8 641.7,357.1 643.0,363.5 644.3,357.6 645.5,372.0 646.7,355.5 648.0,380.0 649.6,356.4 651.0,387.0 652.1,352.3 653.6,388.9 654.7,349.9 656.1,352.7 657.1,368.4 658.3,349.2 659.9,353.0 661.1,362.6 662.1,335.7 663.5,359.6 664.6,335.8 665.6,360.3 666.7,366.4 668.2,343.0 669.8,386.2 671.2,355.0 672.5,348.1 673.5,362.8 674.6,383.7 675.9,390.5 676.9,355.1 678.2,374.8 679.1,333.2 680.6,381.9 681.8,359.5 683.3,335.2 684.3,344.0 685.6,332.6 686.9,329.0 688.1,348.1 689.4,337.6 690.6,374.8 692.0,339.8 693.0,358.4 694.5,384.7 696.1,374.0 697.5,346.7 698.8,362.9 700.3,383.7 701.5,354.4 702.6,390.5 704.1,356.6 705.5,341.3 706.5,340.8 707.5,341.6 708.8,368.1 710.5,390.5 711.7,349.1 712.8,358.1 713.8,340.2 714.8,360.1 716.4,337.8 717.7,340.7 719.3,349.5 720.7,346.1 722.2,330.7 723.2,364.6 724.4,338.5 725.6,359.1 726.8,362.5 728.3,336.9 729.7,355.5 731.0,340.7 732.3,331.9 733.6,356.7 734.6,340.8 736.0,359.2 737.1,389.1 738.2,343.8 739.5,356.8 741.1,340.5 742.7,346.3 743.9,387.1 745.0,346.1 746.1,359.7 747.5,355.8 748.8,343.8 750.2,373.8 751.1,380.2 752.6,347.8 754.3,372.9 755.4,346.0 756.9,379.9 757.9,359.4 759.4,348.3 760.4,336.1 762.0,349.1 763.0,363.6 764.3,351.8 765.5,360.9 767.2,354.0 768.3,345.5 769.9,339.5 771.5,377.9 772.9,354.5 773.9,390.5 775.6,390.5 777.0,342.4 777.9,358.8 779.6,351.4 780.5,368.4 781.9,349.6 783.0,355.2 784.1,356.1 785.2,371.6 786.5,355.7 787.7,378.1 789.1,353.7 790.2,376.6 791.8,368.1 793.1,350.1 794.6,373.7 795.9,343.2 797.4,390.5 798.5,357.3 800.1,352.6 801.6,356.6 802.6,367.5 803.9,386.1 805.5,386.6 806.6,358.6 807.9,368.2 808.9,386.6 810.4,355.0 811.7,364.1 813.4,373.9 814.4,363.1 815.4,357.9 816.5,374.7 817.4,355.0 818.7,385.3 819.7,357.3 821.1,385.9 822.7,348.7 823.8,353.7 825.4,382.0 827.1,346.8 828.5,363.1 829.7,351.2 830.9,354.0 832.1,368.7 833.2,390.5 834.5,359.1 835.7,361.1 837.2,363.3 838.8,381.7 840.1,364.5 841.6,381.1 843.1,364.7 844.7,356.3 846.3,390.5 847.4,362.4 848.6,347.6 850.2,385.6 851.2,372.5 852.4,356.2 853.8,385.7 854.8,381.4 856.1,383.7 857.4,356.1 858.9,374.0 860.4,359.7 861.5,384.0 863.1,384.0 864.7,350.8 866.2,371.1 867.2,375.0 868.5,364.3 869.6,388.8 870.8,354.9 872.0,367.6 873.6,359.5 875.0,368.1 876.6,362.1 877.6,387.1 879.0,360.0 880.5,375.0 881.7,357.3 883.3,386.4 884.7,355.3 886.2,362.8 887.6,384.1 888.9,387.6"/><polyline fill="none" stroke="#d8d626" stroke-width="1.1" points="54.6,183.7 56.6,184.3 58.6,184.9 60.6,185.4 62.6,186.0 64.6,186.6 66.6,187.2 68.6,187.7 70.6,188.2 72.6,188.7 74.6,189.2 76.6,189.7 78.6,190.5 80.6,191.2 82.6,192.0 84.6,192.7 86.6,193.5 88.6,194.8 90.6,196.1 92.6,197.5 94.6,199.6 96.6,206.6 98.6,209.0 100.6,210.5 102.6,212.0 104.6,213.2 106.6,214.4 108.6,215.6 110.6,216.8 112.6,218.1 114.6,219.9 116.6,221.7 118.6,225.0 120.6,229.3 122.6,229.9 124.6,230.6 126.6,231.2 128.6,232.0 130.6,232.9 132.6,233.8 134.6,234.7 136.6,235.5 138.6,236.5 140.6,237.7 142.6,238.9 144.6,240.2 146.6,241.4 148.6,242.7 150.6,244.3 152.6,246.1 154.6,247.8 156.6,249.5 158.6,251.3 160.6,252.8 162.6,254.0 164.6,255.2 166.6,256.5 168.6,257.8 170.6,259.0 172.6,260.1 174.6,261.3 176.6,262.5 178.6,263.7 180.6,264.7 182.6,265.6 184.6,266.4 186.6,267.2 188.6,268.0 190.6,268.8 192.6,269.7 194.6,270.1 196.6,270.6 198.6,271.1 200.6,271.5 202.6,272.0 204.6,272.5 206.6,272.9 208.6,273.2 210.6,273.4 212.6,273.7 214.6,274.6 216.6,275.7 218.6,276.8 220.6,277.9 222.6,279.0 224.6,280.0 226.6,281.1 228.6,282.1 230.6,283.1 232.6,284.1 234.6,285.1 236.6,286.1 238.6,287.1 240.6,287.8 242.6,288.4 244.6,289.0 246.6,289.6 248.6,290.2 250.6,290.8 252.6,291.3 254.6,291.7 256.6,292.1 258.6,292.5 260.6,292.9 262.6,293.3 264.6,293.7 266.6,294.1 268.6,294.5 270.6,294.9 272.6,295.3 274.6,295.7 276.6,296.1 278.6,296.5 280.6,296.8 282.6,297.0 284.6,297.3 286.6,297.6 288.6,297.9 290.6,298.1 292.6,298.5 294.6,298.8 296.6,299.1 298.6,299.4 300.6,299.8 302.6,300.1 304.6,300.5 306.6,301.0 308.6,301.5 310.6,302.0 312.6,302.5 314.6,303.1 316.6,303.6 318.6,304.0 320.6,304.4 322.6,304.8 324.6,305.2 326.6,305.6 328.6,306.0 330.6,306.4 332.6,306.8 334.6,306.9 336.6,306.9 338.6,307.0 340.6,307.1 342.6,307.2 344.6,307.3 346.6,307.2 348.6,307.0 350.6,306.9 352.6,306.7 354.6,306.5 356.6,306.3 358.6,306.1 360.6,305.9 362.6,305.4 364.6,304.9 366.6,304.7 368.6,304.8 370.6,304.8 372.6,304.8 374.6,304.9 376.6,304.9 378.6,305.0 380.6,305.0 382.6,305.1 384.6,305.1 386.6,305.1 388.6,305.2 390.6,305.1 392.6,305.1 394.6,305.0 396.6,304.9 398.6,304.8 400.6,304.8 402.6,304.7 404.6,304.6 406.6,304.5 408.6,304.4 410.6,304.4 412.6,304.3 414.6,304.2 416.6,304.1 418.6,304.1 420.6,304.0 422.6,303.9 424.6,303.8 426.6,303.8 428.6,303.7 430.6,303.6 432.6,303.5 434.6,303.5 436.6,303.4 438.6,303.6 440.6,303.7 442.6,303.9 444.6,304.0 446.6,304.2 448.6,304.3 450.6,304.5 452.6,304.6 454.6,304.7 456.6,304.9 458.6,305.0 460.6,305.2 462.6,305.3 464.6,305.4 466.6,305.6 468.6,305.7 470.6,305.9 472.6,306.0 474.6,306.1 476.6,306.2 478.6,306.3 480.6,306.4 482.6,306.4 484.6,306.5 486.6,306.6 488.6,306.7 490.6,306.8 492.6,306.9 494.6,307.0 496.6,307.1 498.6,307.2 500.6,307.4 502.6,307.9 504.6,308.4 506.6,308.9 508.6,309.4 510.6,309.9 512.6,310.4 514.6,310.9 516.6,311.5 518.6,312.2 520.6,312.9 522.6,313.6 524.6,314.2 526.6,314.9 528.6,315.6 530.6,316.3 532.6,316.5 534.6,316.7 536.6,316.9 538.6,317.1 540.6,317.2 542.6,317.4 544.6,317.6 546.6,317.7 548.6,317.9 550.6,318.1 552.6,318.3 554.6,318.4 556.6,318.6 558.6,318.8 560.6,319.0 562.6,319.1 564.6,319.3 566.6,319.5 568.6,319.7 570.6,320.0 572.6,320.7 574.6,321.3 576.6,322.0 578.6,322.7 580.6,323.4 582.6,324.5 584.6,325.7 586.6,326.8 588.6,328.0 590.6,329.2 592.6,330.6 594.6,332.0 596.6,333.5 598.6,335.0 600.6,336.5 602.6,337.8 604.6,338.9 606.6,340.0 608.6,341.1 610.6,342.2 612.6,342.7 614.6,343.1 616.6,343.4 618.6,343.8 620.6,344.2 622.6,344.6 624.6,344.9 626.6,345.4 628.6,345.9 630.6,346.4 632.6,346.9 634.6,347.5 636.6,348.0 638.6,348.5 640.6,349.0 642.6,349.3 644.6,349.6 646.6,349.9 648.6,350.2 650.6,350.5 652.6,350.8 654.6,351.0 656.6,351.0 658.6,351.0 660.6,351.0 662.6,351.0 664.6,351.0 666.6,350.6 668.6,349.8 670.6,349.0 672.6,348.2 674.6,347.5 676.6,346.8 678.6,346.6 680.6,346.4 682.6,346.2 684.6,346.0 686.6,345.8 688.6,345.6 690.6,345.4 692.6,345.2 694.6,345.0 696.6,344.8 698.6,344.6 700.6,344.4 702.6,344.3 704.6,344.2 706.6,344.2 708.6,344.2 710.6,344.1 712.6,344.1 714.6,344.0 716.6,344.0 718.6,343.9 720.6,343.9 722.6,343.9 724.6,343.8 726.6,343.8 728.6,343.9 730.6,344.2 732.6,344.5 734.6,344.9 736.6,345.2 738.6,345.5 740.6,345.9 742.6,346.2 744.6,346.7 746.6,347.5 748.6,348.3 750.6,349.0 752.6,349.2 754.6,349.4 756.6,349.6 758.6,349.8 760.6,349.9 762.6,350.1 764.6,350.3 766.6,350.4 768.6,350.5 770.6,350.6 772.6,350.7 774.6,350.8 776.6,350.9 778.6,351.3 780.6,352.0 782.6,352.7 784.6,353.4 786.6,354.1 788.6,354.8 790.6,355.5 792.6,355.8 794.6,356.2 796.6,356.5 798.6,356.8 800.6,357.2 802.6,357.5 804.6,357.8 806.6,358.2 808.6,358.5 810.6,358.8 812.6,359.0 814.6,359.1 816.6,359.2 818.6,359.3 820.6,359.4 822.6,359.5 824.6,359.5 826.6,359.6 828.6,359.7 830.6,359.8 832.6,359.9 834.6,359.8 836.6,359.8 838.6,359.7 840.6,359.7 842.6,359.6 844.6,359.6 846.6,359.6 848.6,359.5 850.6,359.5 852.6,359.4 854.6,359.8 856.6,360.3 858.6,360.9 860.6,361.4 862.6,361.9 864.6,361.9 866.6,361.9 868.6,361.8 870.6,361.8 872.6,361.7 874.6,361.6 876.6,361.6 878.6,361.5 880.6,361.4 882.6,361.2 884.6,361.1 886.6,360.9 888.6,360.7"/><circle cx="193.7" cy="270" r="2.7" fill="none" stroke="#10c4c4" stroke-width="0.9"/><text x="185.1" y="263.5" font-size="8.5" fill="#10c4c4" font-family="DejaVu Sans, Liberation Sans, sans-serif">SN1</text><circle cx="332.8" cy="306.8" r="2.7" fill="none" stroke="#10c4c4" stroke-width="0.9"/><text x="324.2" y="300.3" font-size="8.5" fill="#10c4c4" font-family="DejaVu Sans, Liberation Sans, sans-serif">SN2</text><circle cx="472.4" cy="306" r="2.7" fill="none" stroke="#10c4c4" stroke-width="0.9"/><text x="463.8" y="299.5" font-size="8.5" fill="#10c4c4" font-family="DejaVu Sans, Liberation Sans, sans-serif">SN3</text><circle cx="611.2" cy="342.4" r="2.7" fill="none" stroke="#10c4c4" stroke-width="0.9"/><text x="602.6" y="335.9" font-size="8.5" fill="#10c4c4" font-family="DejaVu Sans, Liberation Sans, sans-serif">SN4</text><circle cx="750" cy="349" r="2.7" fill="none" stroke="#10c4c4" stroke-width="0.9"/><text x="741.4" y="342.5" font-size="8.5" fill="#10c4c4" font-family="DejaVu Sans, Liberation Sans, sans-serif">SN5</text></svg>
<div style="left:60px;top:403px;font-size:12.3px;color:#fff;">100.0 Hz</div>
<div style="right:139.8px;top:403px;font-size:12.3px;color:#fff;">100.0 MHz</div>
<div style="left:320.25px;width:300px;text-align:center;top:416px;font-size:12.7px;color:#fff;letter-spacing:0.100px;">Frequency Offset</div>
<div style="left:51px;top:429px;width:839px;height:122px;background:#141516;"></div>
<div style="left:55px;top:461px;width:838px;height:90px;background:#000;"></div>
<div style="left:53.5px;top:432.6px;width:835px;height:12.6px;background:#2f3032;"></div>
<div style="left:55.8px;top:434px;font-size:12.0px;color:#fff;letter-spacing:0.156px;">2 Spot Noise</div>
<div style="left:55px;top:447px;width:833px;height:14px;background:#2a3844;"></div>
<div style="left:220.6px;top:447px;width:1px;height:14px;background:#435362;"></div>
<div style="left:554px;top:447px;width:1px;height:14px;background:#435362;"></div>
<div style="left:123.4px;top:449px;font-size:12.6px;color:#fff;letter-spacing:0.265px;">Type</div>
<div style="left:238.2px;width:300px;text-align:center;top:448px;font-size:13.0px;color:#fff;">Offset Frequency [T1]</div>
<div style="left:570.8px;width:300px;text-align:center;top:448px;font-size:13.0px;color:#fff;">Phase Noise [T1]</div>
<div style="left:123.4px;top:463px;font-size:11.8px;color:#c0c0c0;letter-spacing:-0.326px;">User 1</div>
<div style="right:595.2px;top:463px;font-size:11.6px;color:#c0c0c0;">1.00 kHz</div>
<div style="right:245.4px;top:463px;font-size:11.75px;color:#c0c0c0;">-123.09 dBc/Hz</div>
<div style="left:123.4px;top:481px;font-size:11.8px;color:#c0c0c0;letter-spacing:-0.326px;">User 2</div>
<div style="right:595.2px;top:481px;font-size:11.6px;color:#c0c0c0;">10.00 kHz</div>
<div style="right:245.4px;top:481px;font-size:11.75px;color:#c0c0c0;">-133.31 dBc/Hz</div>
<div style="left:123.4px;top:498px;font-size:11.8px;color:#c0c0c0;letter-spacing:-0.326px;">User 3</div>
<div style="right:595.2px;top:498px;font-size:11.6px;color:#c0c0c0;">100.00 kHz</div>
<div style="right:245.4px;top:498px;font-size:11.75px;color:#c0c0c0;">-133.03 dBc/Hz</div>
<div style="left:123.4px;top:515px;font-size:11.8px;color:#c0c0c0;letter-spacing:-0.326px;">User 4</div>
<div style="right:595.2px;top:515px;font-size:11.6px;color:#c0c0c0;">1.00 MHz</div>
<div style="right:245.4px;top:515px;font-size:11.75px;color:#c0c0c0;">-143.47 dBc/Hz</div>
<div style="left:123.4px;top:533px;font-size:11.8px;color:#c0c0c0;letter-spacing:-0.326px;">User 5</div>
<div style="right:595.2px;top:533px;font-size:11.6px;color:#c0c0c0;">10.00 MHz</div>
<div style="right:245.4px;top:533px;font-size:11.75px;color:#c0c0c0;">-145.12 dBc/Hz</div>
<div style="left:55px;top:513.2px;width:833px;height:1px;background:#7e7e7e;"></div>
<div style="left:447px;top:425.6px;width:49px;height:10.4px;background:rgba(140,146,152,0.42);box-sizing:border-box;border:1px solid rgba(170,174,178,0.35);"></div>
<svg width="50" height="7" viewBox="0 0 50 7" style="left:446px;top:427.4px"><line x1="7.5" y1="3.4" x2="41.5" y2="3.4" stroke="#b4b4b4" stroke-width="0.9" stroke-dasharray="1,1.5"/></svg>
<div style="left:51px;top:551px;width:922px;height:25px;background:#4a6171;"></div>
<div style="left:52px;top:552.6px;width:108.4px;height:21.4px;background:#27323b;"></div>
<div style="left:165.4px;top:552.6px;width:531.6px;height:21.4px;background:#27323b;"></div>
<svg width="8" height="6" viewBox="0 0 8 6" style="left:150.6px;top:561px"><polygon points="1,1 6.4,1 3.7,4.4" fill="#8b97a1"/></svg>
<svg width="8" height="6" viewBox="0 0 8 6" style="left:687px;top:561px"><polygon points="1,1 6.4,1 3.7,4.4" fill="#8b97a1"/></svg>
<div style="left:592.5px;width:300px;text-align:center;top:559px;font-size:9.2px;color:#f2f2f2;font-weight:bold;">Ready</div>
<svg width="60" height="14" viewBox="0 0 60 14" style="left:787px;top:556.7px"><rect x="0.4" y="0.4" width="57.9" height="12.2" fill="#8ea2cc" stroke="#b6c4dc" stroke-width="0.8"/><rect x="1.00" y="1.1" width="5.75" height="10.8" fill="#1c3fb2"/><rect x="7.37" y="1.1" width="5.75" height="10.8" fill="#1c3fb2"/><rect x="13.74" y="1.1" width="5.75" height="10.8" fill="#1c3fb2"/><rect x="20.11" y="1.1" width="5.75" height="10.8" fill="#1c3fb2"/><rect x="26.48" y="1.1" width="5.75" height="10.8" fill="#1c3fb2"/><rect x="32.85" y="1.1" width="5.75" height="10.8" fill="#1c3fb2"/><rect x="39.22" y="1.1" width="5.75" height="10.8" fill="#1c3fb2"/><rect x="45.59" y="1.1" width="5.75" height="10.8" fill="#1c3fb2"/><rect x="51.96" y="1.1" width="5.75" height="10.8" fill="#1c3fb2"/></svg>
<svg width="20" height="13" viewBox="0 0 20 13" style="left:883.6px;top:557.4px"><rect x="0.6" y="0.8" width="18" height="11" rx="1.2" fill="#52ad48" stroke="#b9dcb0" stroke-width="0.7"/><text x="9.8" y="10.4" font-size="10.4" font-weight="bold" font-style="italic" text-anchor="middle" fill="#8c1230" font-family="Liberation Sans, sans-serif">LXI</text></svg>
<div style="right:58.66px;top:555px;font-size:8.7px;color:#e8e8e8;font-weight:bold;letter-spacing:0.136px;">20.09.2018</div>
<div style="right:58.66px;top:565px;font-size:8.7px;color:#e8e8e8;font-weight:bold;letter-spacing:0.140px;">17:02:39</div>
</div>
</body>
</html>
